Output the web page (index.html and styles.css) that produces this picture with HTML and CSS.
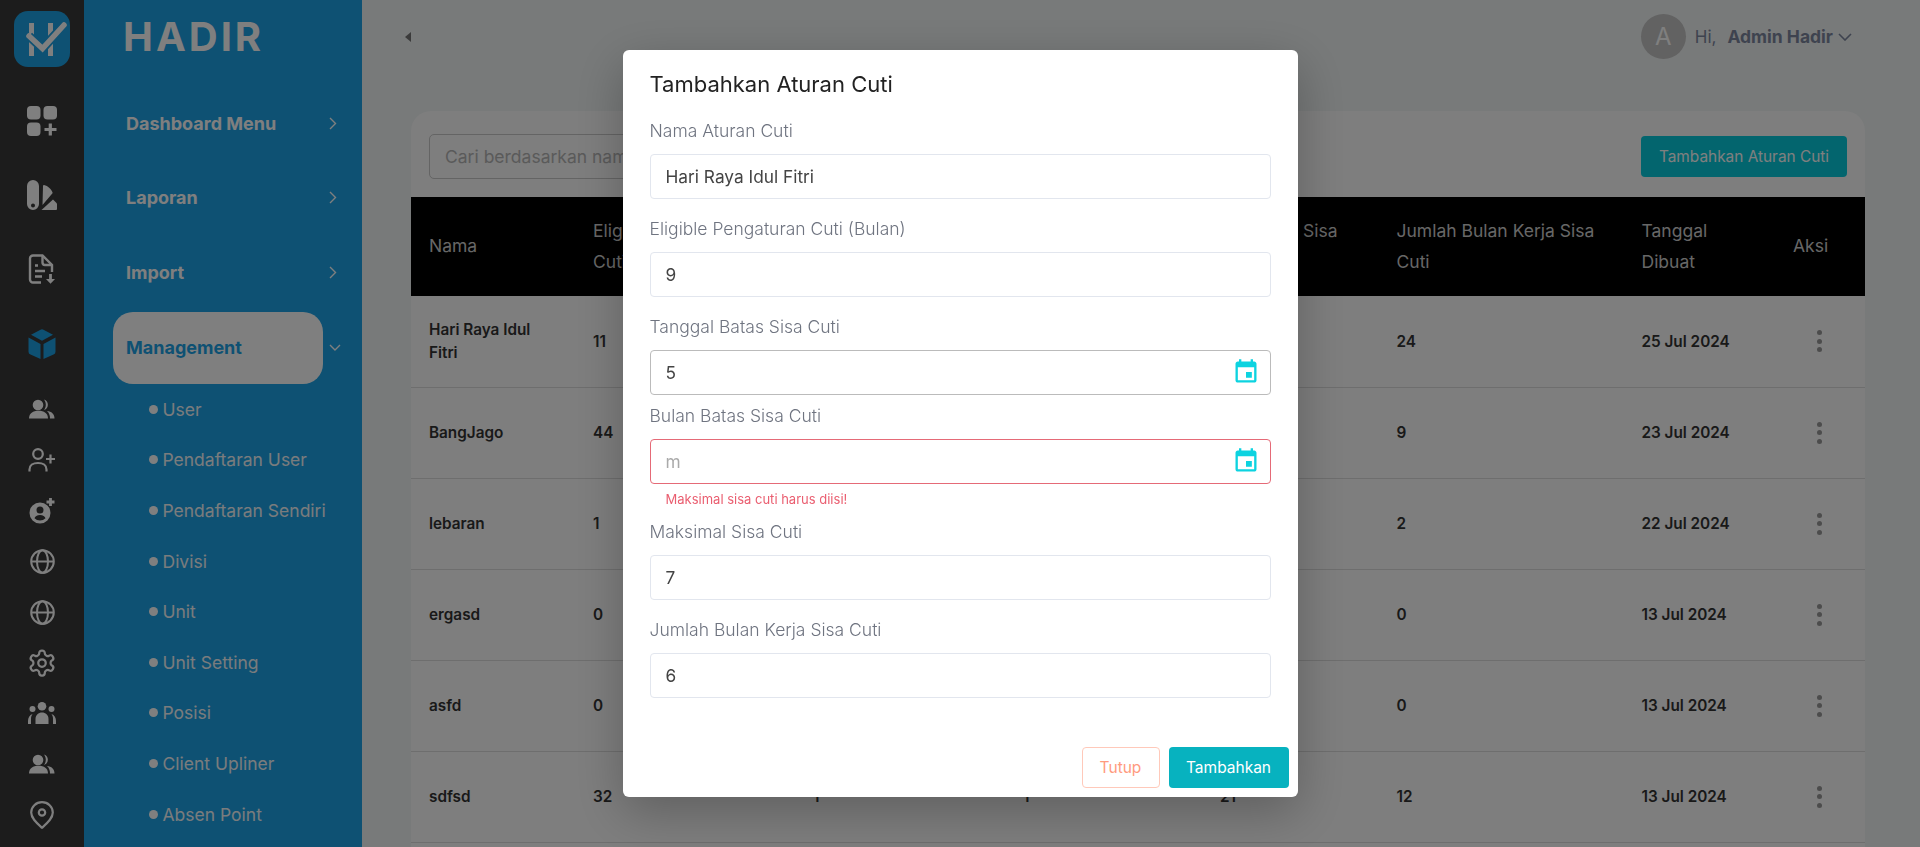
FILE: index.html
```html
<!DOCTYPE html>
<html lang="en">
<head>
    <meta charset="UTF-8">
    <meta name="viewport" content="width=device-width, initial-scale=1.0">
    <title>Aturan Cuti</title>
    <link rel="stylesheet" href="styles.css">
</head>
<body>

<div class="app">
    <aside class="rail">
        <div class="rail-logo">
            <svg width="56" height="56" viewBox="0 0 56 56"><path d="M15 12h5v33h-5zM34 12h5v33h-5z" fill="#fff"/><path d="M15 25l13.500 12.500L50 14" fill="none" stroke="#1ca2e6" stroke-width="9"/><path d="M15 25l13.500 12.500L50 14" fill="none" stroke="#fff" stroke-width="5.500" stroke-linecap="round"/></svg>
        </div>
        <div class="rail-slot">
            <svg width="30" height="30" viewBox="0 0 30 30" fill="#fff"><rect width="13.500" height="13.500" rx="4"/><rect x="16.500" width="13.500" height="13.500" rx="4"/><rect y="16.500" width="13.500" height="13.500" rx="4"/><path d="M23.300 17.500v12M17.500 23.500h12" stroke="#fff" stroke-width="3.200"/></svg>
        </div>
        <div class="rail-slot">
            <svg width="30" height="30" viewBox="0 0 30 30" fill="#fff"><path fill-rule="evenodd" d="M6 0a6 6 0 0 1 6 6v18a6 6 0 0 1-12 0V6a6 6 0 0 1 6-6zm0 23.500a2 2 0 1 0 0 4 2 2 0 0 0 0-4z"/><path d="M16 6q0-1 1-1c4 1 7.500 4 8.700 8L15.500 25z"/><path d="M26 19.500l4 4V29a1 1 0 0 1-1 1H14.500z"/></svg>
        </div>
        <div class="rail-slot">
            <svg width="28" height="30" viewBox="0 0 28 30" fill="none" stroke="#fff" stroke-width="2.400"><path d="M13 28.500H5a3 3 0 0 1-3-3v-21a3 3 0 0 1 3-3h9.500L24 11v7"/><path d="M14.500 2v6.500a2.500 2.500 0 0 0 2.500 2.500h7M7 11.500h3M7 17h10M7 22.500h7"/><path d="M22.500 20v7" stroke-width="2.800"/><path d="M18 25h9l-4.500 4.800z" fill="#fff" stroke="none"/></svg>
        </div>
        <div class="rail-slot rail-slot-cube">
            <svg width="28" height="30" viewBox="0 0 28 30" fill="#1ca2e6"><path d="M12.500 .7a3 3 0 0 1 3 0l9.500 5-11 6-11-6z"/><path d="M.5 8.500l12 6.500v15L2.500 25.500a3 3 0 0 1-2-3z"/><path d="M27.500 8.500l-12 6.500v15l10-4.500a3 3 0 0 0 2-3z"/></svg>
        </div>
        <div class="rail-small">
            <div class="rail-icon">
                <svg width="26" height="20" viewBox="0 0 26 20" fill="#fff"><circle cx="9" cy="6" r="5.300"/><path d="M0 19.500c0-5.300 4-7.800 9.500-7.800s9.500 2.500 9.500 7.800z"/><path d="M15 .5a5.500 5.500 0 0 1 0 10.500c1.200-1.500 1.800-3.300 1.800-5.250S16.200 2 15 .5z"/><path d="M18 12c4.500.5 7.500 2.800 7.500 7.500h-4.500c0-3-.8-5.500-3-7.500z"/></svg>
            </div>
            <div class="rail-icon">
                <svg width="28" height="24" viewBox="0 0 28 24" fill="none" stroke="#fff" stroke-width="2.200"><circle cx="10" cy="6" r="4.800"/><path d="M1.500 23.500v-2c0-4 3.500-6.500 8.500-6.500s8.500 2.500 8.500 6.500v2"/><path d="M22.500 6.500v9M18 11h9"/></svg>
            </div>
            <div class="rail-icon">
                <svg width="26" height="26" viewBox="0 0 26 26" fill="#fff"><path fill-rule="evenodd" d="M11 4.500a10.500 10.500 0 1 1 0 21 10.500 10.500 0 0 1 0-21zm0 4a3.500 3.500 0 1 0 0 7 3.500 3.500 0 0 0 0-7zm0 8.500c-3 0-5 1.300-5.500 3.200a7.500 7.500 0 0 0 11 0C16 18.300 14 17 11 17z"/><path d="M21.500 0v8M17.500 4h8" stroke="#fff" stroke-width="2.800"/></svg>
            </div>
            <div class="rail-icon">
                <svg width="25" height="25" viewBox="0 0 25 25" fill="none" stroke="#fff" stroke-width="2"><circle cx="12.500" cy="12.500" r="11.300"/><ellipse cx="12.500" cy="12.500" rx="5.500" ry="11.300"/><path d="M1 12.500h23"/></svg>
            </div>
            <div class="rail-icon">
                <svg width="25" height="25" viewBox="0 0 25 25" fill="none" stroke="#fff" stroke-width="2"><circle cx="12.500" cy="12.500" r="11.300"/><ellipse cx="12.500" cy="12.500" rx="5.500" ry="11.300"/><path d="M1 12.500h23"/></svg>
            </div>
            <div class="rail-icon">
                <svg width="30" height="30" viewBox="0 0 24 24" fill="none" stroke="#fff" stroke-width="1.800"><path d="M12.220 2h-.44a2 2 0 0 0-2 2v.18a2 2 0 0 1-1 1.730l-.43.250a2 2 0 0 1-2 0l-.15-.08a2 2 0 0 0-2.730.730l-.22.380a2 2 0 0 0 .730 2.730l.15.100a2 2 0 0 1 1 1.720v.510a2 2 0 0 1-1 1.740l-.15.090a2 2 0 0 0-.730 2.730l.22.380a2 2 0 0 0 2.730.730l.15-.08a2 2 0 0 1 2 0l.43.250a2 2 0 0 1 1 1.730V20a2 2 0 0 0 2 2h.44a2 2 0 0 0 2-2v-.18a2 2 0 0 1 1-1.730l.43-.25a2 2 0 0 1 2 0l.15.080a2 2 0 0 0 2.730-.730l.22-.390a2 2 0 0 0-.730-2.730l-.15-.08a2 2 0 0 1-1-1.740v-.5a2 2 0 0 1 1-1.740l.15-.09a2 2 0 0 0 .730-2.730l-.22-.38a2 2 0 0 0-2.730-.730l-.15.080a2 2 0 0 1-2 0l-.43-.25a2 2 0 0 1-1-1.730V4a2 2 0 0 0-2-2z"/><circle cx="12" cy="12" r="3"/></svg>
            </div>
            <div class="rail-icon">
                <svg width="28" height="22" viewBox="0 0 28 22" fill="#fff"><circle cx="14" cy="4.300" r="4.300"/><circle cx="4.500" cy="7" r="3"/><circle cx="23.500" cy="7" r="3"/><path d="M7.500 22v-5c0-4 3-6.500 6.500-6.500s6.500 2.500 6.500 6.500v5z"/><path d="M0 22v-3c0-3 1.500-6 4.500-7-1 1.500-1.500 3-1.500 5v5z"/><path d="M28 22v-3c0-3-1.500-6-4.500-7 1 1.500 1.500 3 1.500 5v5z"/></svg>
            </div>
            <div class="rail-icon">
                <svg width="26" height="20" viewBox="0 0 26 20" fill="#fff"><circle cx="9" cy="6" r="5.300"/><path d="M0 19.500c0-5.300 4-7.800 9.500-7.800s9.500 2.500 9.500 7.800z"/><path d="M15 .5a5.500 5.500 0 0 1 0 10.500c1.200-1.500 1.800-3.300 1.800-5.250S16.200 2 15 .5z"/><path d="M18 12c4.500.5 7.500 2.800 7.500 7.500h-4.500c0-3-.8-5.500-3-7.500z"/></svg>
            </div>
            <div class="rail-icon">
                <svg width="24" height="28" viewBox="0 0 24 28" fill="none" stroke="#fff" stroke-width="2.200"><path d="M12 1.200C6 1.200 1.200 5.800 1.200 11.500c0 6 6 11 10.800 15.300 4.800-4.300 10.800-9.300 10.800-15.300C22.800 5.800 18 1.200 12 1.200z"/><circle cx="12" cy="11.500" r="3.200"/></svg>
            </div>
        </div>
    </aside>

    <nav class="sidebar">
        <div class="brand">HADIR</div>
        <a class="nav-item">Dashboard Menu
            <svg class="chev" width="8" height="13" viewBox="0 0 8 13"><path d="M1 1l5.500 5.500L1 12"/></svg>
        </a>
        <a class="nav-item">Laporan
            <svg class="chev" width="8" height="13" viewBox="0 0 8 13"><path d="M1 1l5.500 5.500L1 12"/></svg>
        </a>
        <a class="nav-item">Import
            <svg class="chev" width="8" height="13" viewBox="0 0 8 13"><path d="M1 1l5.500 5.500L1 12"/></svg>
        </a>
        <div class="nav-open">
            <a class="nav-pill">Management</a>
            <svg class="chev" width="12" height="8" viewBox="0 0 12 8"><path d="M1 1l5 5 5-5"/></svg>
        </div>
        <ul class="subnav">
            <li>User</li>
            <li>Pendaftaran User</li>
            <li>Pendaftaran Sendiri</li>
            <li>Divisi</li>
            <li>Unit</li>
            <li>Unit Setting</li>
            <li>Posisi</li>
            <li>Client Upliner</li>
            <li>Absen Point</li>
        </ul>
    </nav>

    <main class="main">
        <header class="topbar">
            <span class="caret"></span>
            <div class="account">
                <span class="avatar">A</span>
                <span class="hi">Hi,</span>
                <strong class="account-name">Admin Hadir</strong>
                <svg class="account-chev" width="14" height="8" viewBox="0 0 14 8"><path d="M1 1l6 6 6-6"/></svg>
            </div>
        </header>

        <section class="card">
            <div class="toolbar">
                <input class="search" type="text" placeholder="Cari berdasarkan nama">
                <button class="btn-add" type="button">Tambahkan Aturan Cuti</button>
            </div>
            <table class="rules">
                <colgroup>
                    <col class="c-name"><col class="c-elig"><col class="c-date"><col class="c-month"><col class="c-max"><col class="c-work"><col class="c-created"><col class="c-action">
                </colgroup>
                <thead>
                    <tr>
                        <th>Nama</th>
                        <th>Eligible Pengaturan Cuti</th>
                        <th>Tanggal Batas Sisa Cuti</th>
                        <th>Bulan Batas Sisa Cuti</th>
                        <th>Maksimal Sisa Cuti</th>
                        <th>Jumlah Bulan Kerja Sisa Cuti</th>
                        <th>Tanggal Dibuat</th>
                        <th>Aksi</th>
                    </tr>
                </thead>
                <tbody>
                    <tr><td>Hari Raya Idul Fitri</td><td>11</td><td>5</td><td>3</td><td>7</td><td>24</td><td>25 Jul 2024</td><td><span class="dots"><i></i><i></i><i></i></span></td></tr>
                    <tr><td>BangJago</td><td>44</td><td>1</td><td>1</td><td>3</td><td>9</td><td>23 Jul 2024</td><td><span class="dots"><i></i><i></i><i></i></span></td></tr>
                    <tr><td>lebaran</td><td>1</td><td>1</td><td>1</td><td>2</td><td>2</td><td>22 Jul 2024</td><td><span class="dots"><i></i><i></i><i></i></span></td></tr>
                    <tr><td>ergasd</td><td>0</td><td>0</td><td>0</td><td>0</td><td>0</td><td>13 Jul 2024</td><td><span class="dots"><i></i><i></i><i></i></span></td></tr>
                    <tr><td>asfd</td><td>0</td><td>0</td><td>0</td><td>0</td><td>0</td><td>13 Jul 2024</td><td><span class="dots"><i></i><i></i><i></i></span></td></tr>
                    <tr><td>sdfsd</td><td>32</td><td>1</td><td>1</td><td>21</td><td>12</td><td>13 Jul 2024</td><td><span class="dots"><i></i><i></i><i></i></span></td></tr>
                </tbody>
            </table>
        </section>
    </main>
</div>

<div class="overlay">
    <form class="modal">
        <h2 class="modal-title">Tambahkan Aturan Cuti</h2>
        <div class="modal-body">
            <div class="field">
                <label for="nama">Nama Aturan Cuti</label>
                <input id="nama" type="text" value="Hari Raya Idul Fitri">
            </div>
            <div class="field">
                <label for="eligible">Eligible Pengaturan Cuti (Bulan)</label>
                <input id="eligible" type="text" value="9">
            </div>
            <div class="field field-tight">
                <label for="tanggal">Tanggal Batas Sisa Cuti</label>
                <div class="date-wrap">
                    <input id="tanggal" class="is-active" type="text" value="5">
                    <svg class="date-icon" width="28" height="28" viewBox="0 0 24 24"><path d="M17 12h-5v5h5v-5zM16 1v2H8V1H6v2H5c-1.110 0-1.990.9-1.990 2L3 19c0 1.100.89 2 2 2h14c1.100 0 2-.9 2-2V5c0-1.100-.9-2-2-2h-1V1h-2zm3 18H5V8h14v11z"/></svg>
                </div>
            </div>
            <div class="field field-error">
                <label for="bulan">Bulan Batas Sisa Cuti</label>
                <div class="date-wrap">
                    <input id="bulan" class="is-invalid" type="text" placeholder="m">
                    <svg class="date-icon" width="28" height="28" viewBox="0 0 24 24"><path d="M17 12h-5v5h5v-5zM16 1v2H8V1H6v2H5c-1.110 0-1.990.9-1.990 2L3 19c0 1.100.89 2 2 2h14c1.100 0 2-.9 2-2V5c0-1.100-.9-2-2-2h-1V1h-2zm3 18H5V8h14v11z"/></svg>
                </div>
                <p class="error-text">Maksimal sisa cuti harus diisi!</p>
            </div>
            <div class="field">
                <label for="maksimal">Maksimal Sisa Cuti</label>
                <input id="maksimal" type="text" value="7">
            </div>
            <div class="field field-last">
                <label for="jumlah">Jumlah Bulan Kerja Sisa Cuti</label>
                <input id="jumlah" type="text" value="6">
            </div>
        </div>
        <div class="modal-footer">
            <button class="btn-close" type="button">Tutup</button>
            <button class="btn-submit" type="button">Tambahkan</button>
        </div>
    </form>
</div>

</body>
</html>
```

FILE: styles.css
```css
* {
    box-sizing: border-box;
}
html, body {
    height: 100%;
    margin: 0;
    overflow: hidden;
}
body {
    font-family: Inter, "Noto Sans", sans-serif;
    color: #333;
    background: #f0f4f4;
}
.app {
    display: flex;
    height: 847px;
}

/* icon rail */
.rail {
    width: 84px;
    flex: none;
    background: #383838;
    padding-top: 11px;
    display: flex;
    flex-direction: column;
    align-items: center;
}
.rail-logo {
    width: 56px;
    height: 56px;
    border-radius: 14px;
    background: #1ca2e6;
    margin-bottom: 17px;
}
.rail-logo svg {
    display: block;
}
.rail-slot {
    height: 74px;
    display: flex;
    align-items: center;
    justify-content: center;
}
.rail-slot-cube {
    height: 76px;
}
.rail-small {
    padding-top: 2px;
}
.rail-icon {
    height: 50.700px;
    display: flex;
    align-items: center;
    justify-content: center;
}

/* menu */
.sidebar {
    width: 278px;
    flex: none;
    background: #1ca2e6;
    padding-left: 42px;
    color: #fff;
}
.brand {
    height: 86px;
    padding-top: 12px;
    margin-left: -3px;
    font-size: 40px;
    line-height: 50px;
    font-weight: 700;
    letter-spacing: 3px;
}
.nav-item {
    width: 211px;
    height: 74.500px;
    display: flex;
    align-items: center;
    justify-content: space-between;
    font-size: 18px;
    font-weight: 700;
}
.chev {
    fill: none;
    stroke: #fff;
    stroke-width: 1.400;
}
.nav-open {
    display: flex;
    align-items: center;
    margin: 2.500px 0 0 -13px;
}
.nav-pill {
    width: 210px;
    height: 72px;
    border-radius: 20px;
    background: #fff;
    color: #1ca2e6;
    font-size: 18px;
    font-weight: 700;
    padding: 0 0 2px 13px;
    display: flex;
    align-items: center;
}
.nav-open .chev {
    margin-left: 6px;
}
.subnav {
    list-style: none;
    margin: 0;
    padding: 0 0 0 23px;
}
.subnav li {
    height: 50.600px;
    display: flex;
    align-items: center;
    font-size: 17.500px;
    color: #f4f8fb;
}
.subnav li::before {
    content: "";
    width: 9px;
    height: 9px;
    border-radius: 50%;
    background: #fff;
    margin-right: 4.500px;
}

/* page */
.main {
    flex: 1;
    min-width: 0;
    padding: 0 55px 0 49px;
}
.topbar {
    height: 111px;
    padding-top: 14px;
    display: flex;
    justify-content: space-between;
    align-items: flex-start;
}
.caret {
    width: 0;
    height: 0;
    margin: 18px 0 0 -6px;
    border-style: solid;
    border-width: 5px 6px 5px 0;
    border-color: transparent #777 transparent transparent;
}
.account {
    display: flex;
    align-items: center;
    height: 45px;
    margin-right: 13px;
    color: #7d879f;
    font-size: 17px;
}
.avatar {
    width: 45px;
    height: 45px;
    border-radius: 50%;
    background: #c4c4c4;
    color: #fff;
    font-size: 24px;
    display: flex;
    align-items: center;
    justify-content: center;
    margin-right: 9px;
}
.hi {
    margin-right: 11px;
}
.account-name {
    font-size: 17.500px;
    font-weight: 700;
}
.account-chev {
    fill: none;
    stroke: #7d879f;
    stroke-width: 1.600;
    margin-left: 5px;
}
.card {
    background: #fcfcfc;
    border-radius: 20px 20px 0 0;
    padding-top: 23px;
    padding-bottom: 40px;
}
.toolbar {
    height: 63px;
    padding: 0 18px;
    display: flex;
    justify-content: space-between;
    align-items: flex-start;
}
.search {
    width: 420px;
    height: 45px;
    border: 1px solid #c9c9c9;
    border-radius: 5px;
    padding: 0 15px;
    font: inherit;
    font-size: 17.500px;
    background: transparent;
}
.search::placeholder {
    color: #b5b5b5;
}
.btn-add {
    width: 206px;
    height: 41px;
    margin-top: 2px;
    border: none;
    border-radius: 4px;
    background: #06cadc;
    color: #fff;
    font: inherit;
    font-size: 15.400px;
}
.rules {
    width: 100%;
    table-layout: fixed;
    border-collapse: collapse;
}
.c-name { width: 164px; }
.c-elig { width: 220px; }
.c-date { width: 210px; }
.c-month { width: 197px; }
.c-max { width: 176.500px; }
.c-work { width: 245px; }
.c-created { width: 151.500px; }
.rules th {
    height: 99px;
    padding: 0 18px 2px;
    background: #000;
    color: #cfcfcf;
    font-size: 17.500px;
    font-weight: 400;
    line-height: 31px;
    text-align: left;
}
.rules td {
    height: 91px;
    padding: 0 18px;
    border-bottom: 1px solid #dcdcdc;
    font-size: 15.300px;
    font-weight: 600;
    line-height: 23px;
    color: #333;
}
.dots {
    display: flex;
    flex-direction: column;
    gap: 3.500px;
    margin-left: 24px;
}
.dots i {
    width: 5px;
    height: 5px;
    border-radius: 50%;
    background: #999;
}

/* dialog */
.overlay {
    position: fixed;
    top: 0;
    right: 0;
    bottom: 0;
    left: 0;
    background: rgba(0, 0, 0, .5);
}
.modal {
    width: 675px;
    height: 747px;
    margin: 50px auto 0;
    background: #fff;
    border-radius: 6px;
    box-shadow: 0 15px 50px rgba(0, 0, 0, .25);
    display: flex;
    flex-direction: column;
}
.modal-title {
    margin: 0;
    padding: 19px 27px 21px;
    font-size: 22px;
    line-height: 30px;
    font-weight: 400;
    color: #222;
}
.modal-body {
    padding: 0 27px;
}
.field {
    margin-bottom: 19px;
}
.field-tight {
    margin-bottom: 10px;
}
.field-error {
    margin-bottom: 13px;
}
.field-last {
    margin-bottom: 0;
}
.field label {
    display: block;
    font-size: 17.500px;
    font-weight: 300;
    line-height: 22px;
    margin-bottom: 12px;
    color: #6f7480;
}
.field input {
    display: block;
    width: 100%;
    height: 45px;
    padding: 0 15px;
    border: 1px solid #e2e6ee;
    border-radius: 4px;
    font: inherit;
    font-size: 17.300px;
    color: #444;
    outline: none;
}
.field input.is-active {
    border-color: #bbb;
}
.field input.is-invalid {
    border-color: #e56a77;
}
.field input::placeholder {
    color: #aaa;
}
.date-wrap {
    position: relative;
}
.date-icon {
    position: absolute;
    top: 8px;
    right: 11px;
    fill: #0dd3e0;
}
.error-text {
    margin: 6px 0 0;
    padding-left: 16px;
    font-size: 13px;
    line-height: 18px;
    color: #ea5e70;
}
.modal-footer {
    margin-top: auto;
    padding: 0 9px 9px;
    display: flex;
    justify-content: flex-end;
    gap: 9px;
}
.modal-footer button {
    height: 41px;
    border-radius: 4px;
    font: inherit;
    font-size: 15.500px;
}
.btn-close {
    width: 78px;
    background: #fff;
    border: 1px solid #ffc9ba;
    color: #ff9a7e;
}
.btn-submit {
    width: 120px;
    background: #07b2bf;
    border: none;
    color: #fff;
}
```
